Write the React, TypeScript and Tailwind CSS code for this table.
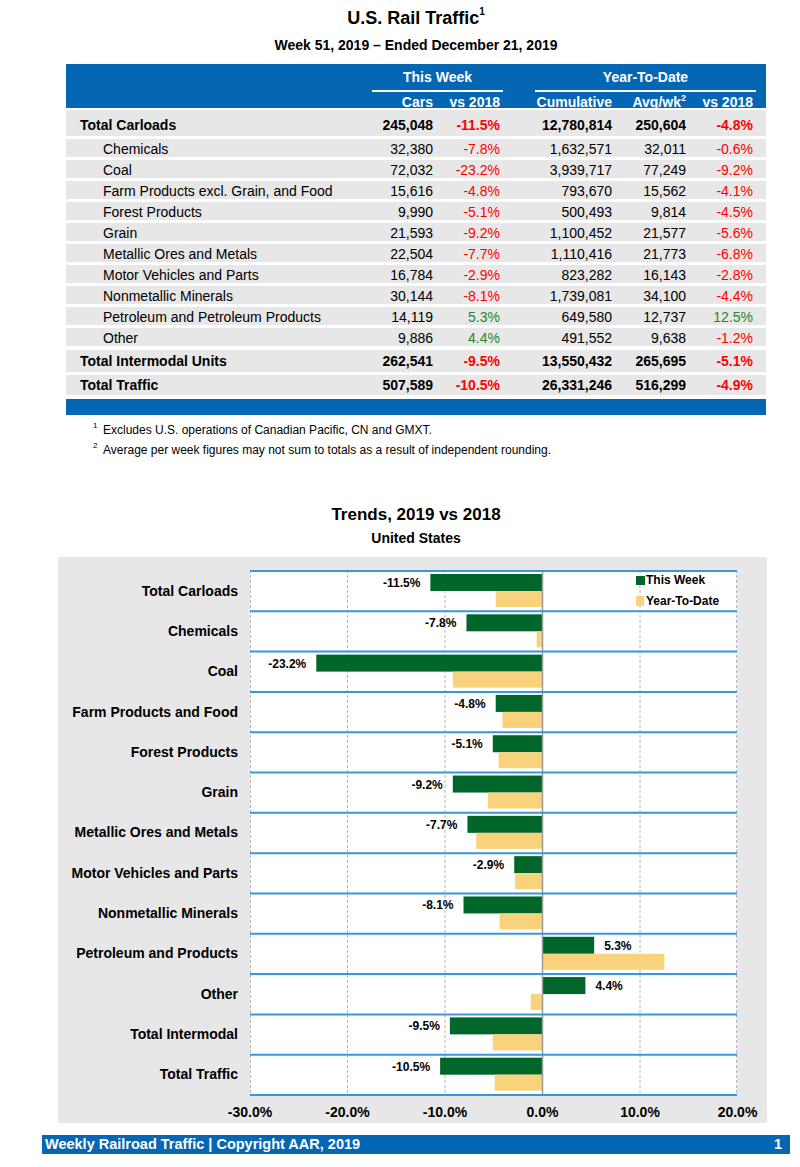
import React from 'react';

// ────────────────────────────────────────────────────────────────
// Data
// ────────────────────────────────────────────────────────────────
interface TableRow {
  label: string;
  cars: string;
  vsWeek: number;
  cumulative: string;
  avg: string;
  vsYtd: number;
  total?: boolean;
}

const TABLE_ROWS: TableRow[] = [
  { label: 'Total Carloads', cars: '245,048', vsWeek: -11.5, cumulative: '12,780,814', avg: '250,604', vsYtd: -4.8, total: true },
  { label: 'Chemicals', cars: '32,380', vsWeek: -7.8, cumulative: '1,632,571', avg: '32,011', vsYtd: -0.6 },
  { label: 'Coal', cars: '72,032', vsWeek: -23.2, cumulative: '3,939,717', avg: '77,249', vsYtd: -9.2 },
  { label: 'Farm Products excl. Grain, and Food', cars: '15,616', vsWeek: -4.8, cumulative: '793,670', avg: '15,562', vsYtd: -4.1 },
  { label: 'Forest Products', cars: '9,990', vsWeek: -5.1, cumulative: '500,493', avg: '9,814', vsYtd: -4.5 },
  { label: 'Grain', cars: '21,593', vsWeek: -9.2, cumulative: '1,100,452', avg: '21,577', vsYtd: -5.6 },
  { label: 'Metallic Ores and Metals', cars: '22,504', vsWeek: -7.7, cumulative: '1,110,416', avg: '21,773', vsYtd: -6.8 },
  { label: 'Motor Vehicles and Parts', cars: '16,784', vsWeek: -2.9, cumulative: '823,282', avg: '16,143', vsYtd: -2.8 },
  { label: 'Nonmetallic Minerals', cars: '30,144', vsWeek: -8.1, cumulative: '1,739,081', avg: '34,100', vsYtd: -4.4 },
  { label: 'Petroleum and Petroleum Products', cars: '14,119', vsWeek: 5.3, cumulative: '649,580', avg: '12,737', vsYtd: 12.5 },
  { label: 'Other', cars: '9,886', vsWeek: 4.4, cumulative: '491,552', avg: '9,638', vsYtd: -1.2 },
  { label: 'Total Intermodal Units', cars: '262,541', vsWeek: -9.5, cumulative: '13,550,432', avg: '265,695', vsYtd: -5.1, total: true },
  { label: 'Total Traffic', cars: '507,589', vsWeek: -10.5, cumulative: '26,331,246', avg: '516,299', vsYtd: -4.9, total: true },
];

// row spacing: [margin-top, height]
const ROW_CLASSES = [
  'mt-[2px] h-[26px] pt-[5px]',
  'mt-[3px] h-[18px]',
  'mt-[3px] h-[18px]',
  'mt-[3px] h-[18px]',
  'mt-[3px] h-[18px]',
  'mt-[3px] h-[18px]',
  'mt-[3px] h-[18px]',
  'mt-[3px] h-[18px]',
  'mt-[3px] h-[18px]',
  'mt-[3px] h-[18px]',
  'mt-[3px] h-[18px]',
  'mt-[4px] h-[22px]',
  'mt-[3px] h-[20px]',
];

const TRENDS: { label: string; week: number; ytd: number }[] = [
  { label: 'Total Carloads', week: -11.5, ytd: -4.8 },
  { label: 'Chemicals', week: -7.8, ytd: -0.6 },
  { label: 'Coal', week: -23.2, ytd: -9.2 },
  { label: 'Farm Products and Food', week: -4.8, ytd: -4.1 },
  { label: 'Forest Products', week: -5.1, ytd: -4.5 },
  { label: 'Grain', week: -9.2, ytd: -5.6 },
  { label: 'Metallic Ores and Metals', week: -7.7, ytd: -6.8 },
  { label: 'Motor Vehicles and Parts', week: -2.9, ytd: -2.8 },
  { label: 'Nonmetallic Minerals', week: -8.1, ytd: -4.4 },
  { label: 'Petroleum and Products', week: 5.3, ytd: 12.5 },
  { label: 'Other', week: 4.4, ytd: -1.2 },
  { label: 'Total Intermodal', week: -9.5, ytd: -5.1 },
  { label: 'Total Traffic', week: -10.5, ytd: -4.9 },
];

const GRID = 'grid grid-cols-[1fr_75px_67px_112px_74px_67px] pr-[13px]';

function pct(v: number) {
  return `${v.toFixed(1)}%`;
}

function Pct({ v }: { v: number }) {
  return (
    <div className={`text-right ${v < 0 ? 'text-[#ff0000]' : 'text-[#1e8a2a]'}`}>{pct(v)}</div>
  );
}

// ────────────────────────────────────────────────────────────────
// Table
// ────────────────────────────────────────────────────────────────
function TrafficTable() {
  return (
    <div className="w-[700px] text-[14px]">
      <div className="bg-[#0566b4] text-white font-bold h-[44px]">
        <div className={`${GRID} pt-[4px]`}>
          <div />
          <div className="col-span-2 ml-[14px] mr-[-3px] text-center leading-[18px] pb-[4px] border-b-2 border-white">
            This Week
          </div>
          <div className="col-span-3 ml-[35px] mr-[-3px] text-center leading-[18px] pb-[4px] border-b-2 border-white">
            Year-To-Date
          </div>
        </div>
        <div className={`${GRID} mt-[2px] leading-[16px]`}>
          <div />
          <div className="text-right">Cars</div>
          <div className="text-right">vs 2018</div>
          <div className="text-right">Cumulative</div>
          <div className="text-right">
            Avg/wk<sup className="text-[9px] -top-[0.7em]">2</sup>
          </div>
          <div className="text-right">vs 2018</div>
        </div>
      </div>

      {TABLE_ROWS.map((r, i) => (
        <div
          key={r.label}
          className={`${GRID} ${ROW_CLASSES[i]} bg-[#e7e7e7] items-center ${r.total ? 'font-bold' : ''}`}
        >
          <div className={r.total ? 'pl-[14px]' : 'pl-[37px]'}>{r.label}</div>
          <div className="text-right">{r.cars}</div>
          <Pct v={r.vsWeek} />
          <div className="text-right">{r.cumulative}</div>
          <div className="text-right">{r.avg}</div>
          <Pct v={r.vsYtd} />
        </div>
      ))}

      <div className="mt-[4px] h-[16px] bg-[#0566b4]" />

      <div className="mt-[7px] text-[12px] leading-[16px] flex flex-col gap-[4px]">
        <div className="pl-[27px]">
          <sup className="inline-block w-[10px] text-[8px] -top-[0.8em]">1</sup>
          Excludes U.S. operations of Canadian Pacific, CN and GMXT.
        </div>
        <div className="pl-[27px]">
          <sup className="inline-block w-[10px] text-[8px] -top-[0.8em]">2</sup>
          Average per week figures may not sum to totals as a result of independent rounding.
        </div>
      </div>
    </div>
  );
}

// ────────────────────────────────────────────────────────────────
// Chart (plot drawn as svg)
// ────────────────────────────────────────────────────────────────
const PLOT_W = 487;
const X0 = 292.5;
const PX = 9.75;
const RH = 524 / 13;

function TrendPlot() {
  const ticks = [-30, -20, -10, 0, 10, 20];
  return (
    <svg width={PLOT_W} height={553} className="block overflow-visible">
      <rect x={0} y={0} width={PLOT_W} height={526} fill="#ffffff" />

      {ticks.map((t) =>
        t === 0 ? null : (
          <line
            key={t}
            x1={Math.min(Math.max(X0 + t * PX, 0.5), PLOT_W - 0.5)}
            x2={Math.min(Math.max(X0 + t * PX, 0.5), PLOT_W - 0.5)}
            y1={0}
            y2={526}
            stroke="#b4b4b4"
            strokeWidth={1}
            strokeDasharray="3 2"
          />
        )
      )}

      {TRENDS.map((d, i) => {
        const top = 1 + i * RH;
        const wx = X0 + d.week * PX;
        const yx = X0 + d.ytd * PX;
        return (
          <g key={d.label}>
            <rect x={Math.min(X0, wx)} y={top + 3} width={Math.abs(d.week) * PX} height={17} fill="#006629" />
            <rect x={Math.min(X0, yx)} y={top + 20} width={Math.abs(d.ytd) * PX} height={16} fill="#f9d27c" />
            <text
              x={d.week < 0 ? wx - 10 : wx + 10}
              y={top + 16}
              textAnchor={d.week < 0 ? 'end' : 'start'}
              fontSize={12}
              fontWeight={700}
              fill="#000"
            >
              {pct(d.week)}
            </text>
          </g>
        );
      })}

      <line x1={X0} x2={X0} y1={0} y2={526} stroke="#9a9a9a" strokeWidth={1.5} />

      {Array.from({ length: 14 }).map((_, i) => (
        <line key={i} x1={0} x2={PLOT_W} y1={1 + i * RH} y2={1 + i * RH} stroke="#3a96da" strokeWidth={2} />
      ))}

      {/* legend */}
      <rect x={386} y={6} width={9} height={9} fill="#006629" />
      <text x={396} y={14} fontSize={12} fontWeight={700} fill="#000">This Week</text>
      <rect x={386} y={26} width={8} height={10} fill="#f9d27c" />
      <text x={396} y={35} fontSize={12} fontWeight={700} fill="#000">Year-To-Date</text>

      {ticks.map((t) => (
        <text key={t} x={X0 + t * PX} y={547} textAnchor="middle" fontSize={14} fontWeight={700} fill="#000">
          {t.toFixed(1)}%
        </text>
      ))}
    </svg>
  );
}

function TrendChart() {
  return (
    <div className="ml-[58px] w-[709px] h-[566px] bg-[#e7e7e7] flex pt-[13px]">
      <div className="w-[192px] pr-[12px] flex flex-col">
        {TRENDS.map((d, i) => (
          <div
            key={d.label}
            className={`h-[40.31px] flex items-center justify-end font-bold text-[14px] ${i === 0 ? 'mt-[1px]' : ''}`}
          >
            {d.label}
          </div>
        ))}
      </div>
      <TrendPlot />
    </div>
  );
}

// ────────────────────────────────────────────────────────────────
// Page
// ────────────────────────────────────────────────────────────────
export default function App() {
  return (
    <div className="w-[800px] min-h-[1167px] bg-white text-black font-['Liberation_Sans',Arial,sans-serif]">
      <div className="ml-[66px] w-[700px] pt-[8px] text-center font-bold">
        <div className="text-[18px] leading-[20px]">
          U.S. Rail Traffic<sup className="text-[10px] -top-[0.9em]">1</sup>
        </div>
        <div className="mt-[9px] text-[14px] leading-[16px]">Week 51, 2019 – Ended December 21, 2019</div>
      </div>

      <div className="ml-[66px] mt-[11px]">
        <TrafficTable />
      </div>

      <div className="ml-[66px] w-[700px] mt-[47px] text-center font-bold">
        <div className="text-[17px] leading-[20px]">Trends, 2019 vs 2018</div>
        <div className="mt-[4px] text-[14px] leading-[18px]">United States</div>
      </div>

      <div className="mt-[10px]">
        <TrendChart />
      </div>

      <div className="ml-[42px] mt-[12px] w-[748px] h-[19px] bg-[#0566b4] text-white font-bold text-[14.5px] leading-[19px] flex justify-between pl-[3px] pr-[8px]">
        <span>Weekly Railroad Traffic | Copyright AAR, 2019</span>
        <span>1</span>
      </div>
    </div>
  );
}
